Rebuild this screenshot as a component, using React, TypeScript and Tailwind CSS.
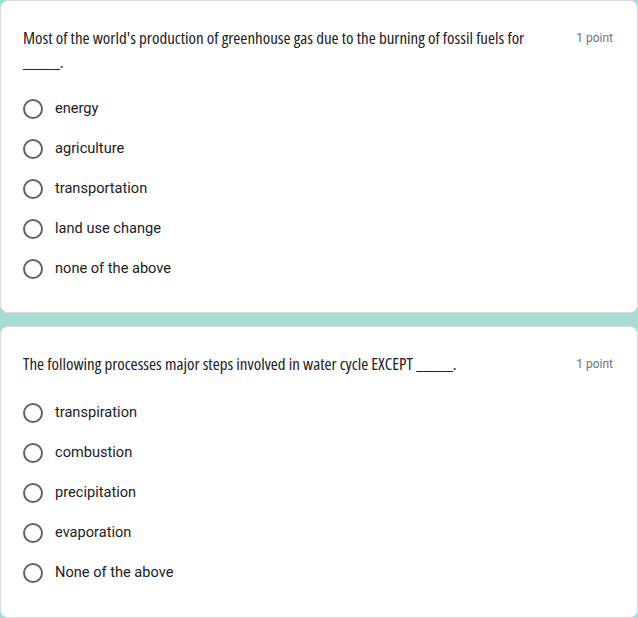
import React from "react";

type Question = {
  text: string;
  options: string[];
};

const questions: Question[] = [
  {
    text: "Most of the world's production of greenhouse gas due to the burning of fossil fuels for _____.",
    options: ["energy", "agriculture", "transportation", "land use change", "none of the above"],
  },
  {
    text: "The following processes major steps involved in water cycle EXCEPT _____.",
    options: ["transpiration", "combustion", "precipitation", "evaporation", "None of the above"],
  },
];

function Radio() {
  return <span className="block h-5 w-5 shrink-0 rounded-full border-2 border-[#5f6368]" />;
}

function QuestionCard({ q, className, listClass }: { q: Question; className?: string; listClass: string }) {
  return (
    <div className={"rounded-lg border border-[#dadce0] bg-white pt-[25px] pl-[22px] pr-6 " + (className ?? "")}>
      <div className="flex items-start justify-between gap-6">
        <p className="max-w-[520px] text-[17px] leading-6 text-[#202124] [font-family:'Open_Sans',sans-serif] [font-stretch:condensed]">
          {q.text}
        </p>
        <span className="shrink-0 pt-1 text-xs text-[#70757a] [font-family:Roboto,sans-serif]">1 point</span>
      </div>
      <div className={"flex flex-col " + listClass}>
        {q.options.map((o) => (
          <label key={o} className="flex h-10 items-center gap-3">
            <Radio />
            <span className="text-[14.6px] text-[#202124] [font-family:Roboto,sans-serif]">{o}</span>
          </label>
        ))}
      </div>
    </div>
  );
}

export default function App() {
  return (
    <div className="flex h-[618px] w-[638px] flex-col gap-[13px] bg-[#a7dcd5]">
      <QuestionCard q={questions[0]} className="h-[313px]" listClass="mt-[15px]" />
      <QuestionCard q={questions[1]} className="h-[292px]" listClass="mt-[17px]" />
    </div>
  );
}
